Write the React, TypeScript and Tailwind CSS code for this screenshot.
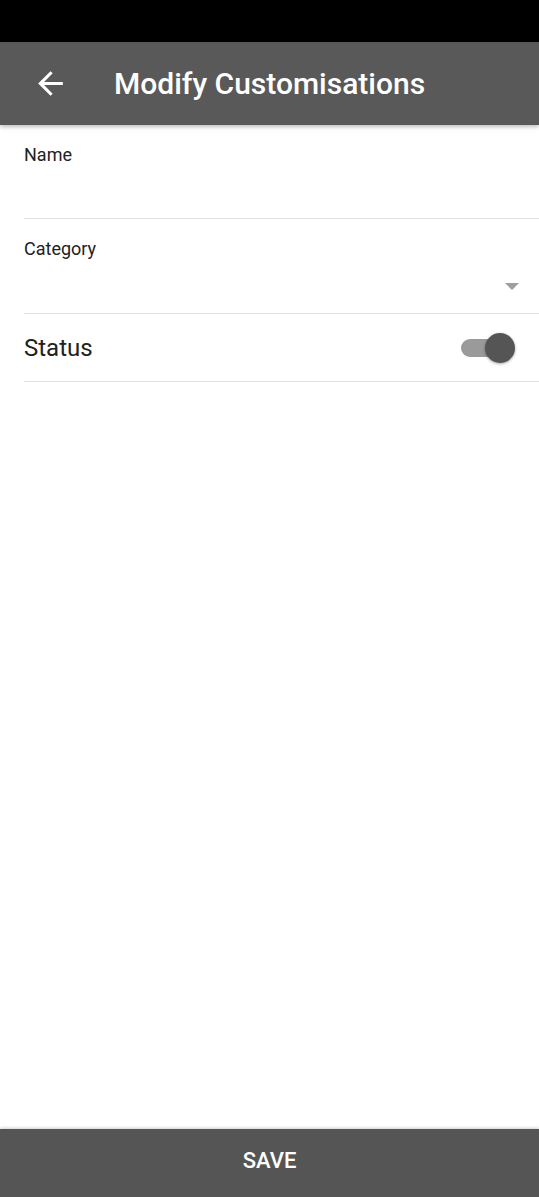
export default function App() {
  return (
    <div className="flex min-h-[1197px] flex-col bg-white font-['Roboto',sans-serif] text-[#212121]">
      <div className="h-[42px] bg-black" />
      <header className="relative z-10 flex h-[83px] items-center bg-[#595959] shadow-[0_2px_4px_rgba(0,0,0,0.25)]">
        <svg
          className="ml-[32px] h-[37px] w-[37px]"
          viewBox="0 0 24 24"
          fill="white"
        >
          <path d="M20 11H7.83l5.59-5.59L12 4l-8 8 8 8 1.41-1.41L7.83 13H20v-2z" />
        </svg>
        <h1 className="ml-[45px] text-[30px] font-medium leading-none text-white">
          Modify Customisations
        </h1>
      </header>

      <main className="flex flex-1 flex-col pl-[24px]">
        <div className="border-b border-[#e0e0e0] pt-[20px]">
          <p className="text-[18px] leading-[20px]">Name</p>
          <div className="h-[53px]" />
        </div>
        <div className="border-b border-[#e0e0e0] pt-[20px]">
          <p className="text-[18px] leading-[20px]">Category</p>
          <div className="flex h-[54px] items-center justify-end pr-[20px]">
            <svg width="14" height="7" viewBox="0 0 14 7">
              <polygon points="0,0 14,0 7,7" fill="#9e9e9e" />
            </svg>
          </div>
        </div>
        <div className="flex h-[68px] items-center justify-between border-b border-[#e0e0e0] pr-[24px]">
          <span className="text-[24px] leading-[28px]">Status</span>
          <div className="relative h-[30px] w-[54px]">
            <div className="absolute left-0 top-[6px] h-[18px] w-[44px] rounded-full bg-[#9a9a9a]" />
            <div className="absolute right-0 top-0 h-[30px] w-[30px] rounded-full bg-[#555555] shadow-[0_1px_3px_rgba(0,0,0,0.35)]" />
          </div>
        </div>
        <div className="flex-1" />
      </main>

      <button className="flex h-[68px] w-full items-center justify-center bg-[#555555] pb-[6px] text-[22px] font-medium text-white shadow-[0_-1px_3px_rgba(0,0,0,0.2)]">
        SAVE
      </button>
    </div>
  );
}
